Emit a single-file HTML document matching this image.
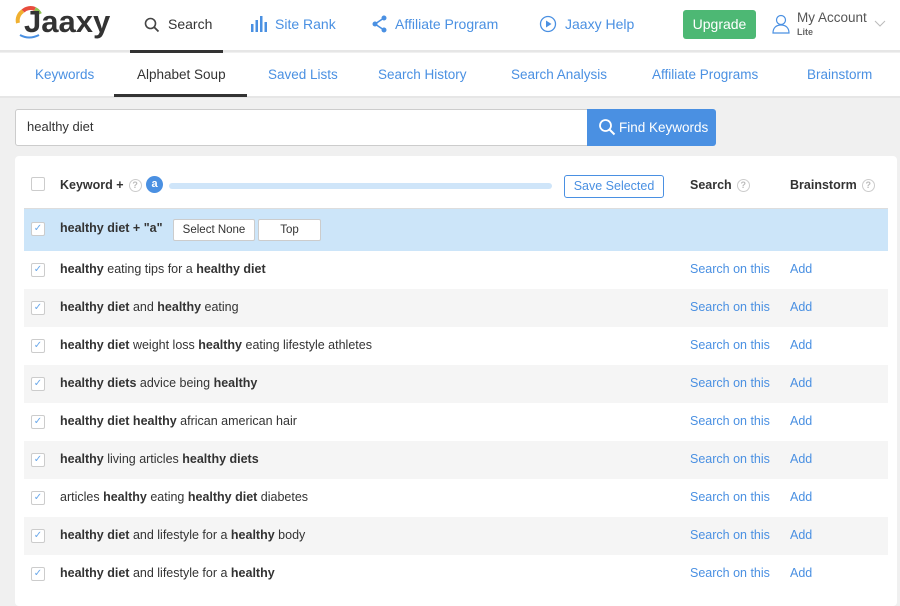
<!DOCTYPE html><html><head><style>
*{box-sizing:border-box;margin:0;padding:0}
body{width:900px;height:595px;overflow:hidden;background:#f0f0f0;font-family:"Liberation Sans",sans-serif;font-size:13px;color:#333}
.top{position:absolute;left:0;top:0;width:900px;height:52px;background:#fff;border-bottom:2px solid #e6e6e6}
.sub{position:absolute;left:0;top:53px;width:900px;height:45px;background:#fff;border-bottom:2px solid #e6e6e6}
.a{position:absolute;white-space:nowrap}
.blue{color:#4a90e2}
.nav{font-size:14px;top:16px}
.sn{font-size:13.5px;top:14px;color:#4a90e2}
.card{position:absolute;left:15px;top:156px;width:882px;height:450px;background:#fff;border-radius:4px}
.row{position:absolute;left:9px;width:864px;height:38px}
.row.g{background:#f5f5f5}
.cb{position:absolute;left:7px;top:12px;width:14px;height:14px;border:1px solid #ccc;background:#fff;border-radius:2px;color:#6aa8ea;font-size:10px;line-height:12px;text-align:center}
.kw{position:absolute;left:36px;top:11px;font-size:12.5px}
.s{position:absolute;left:666px;top:11px;color:#4a90e2;font-size:12.5px}
.ad{position:absolute;left:766px;top:11px;color:#4a90e2;font-size:12.5px}
.q{display:inline-block;width:13px;height:13px;border:1px solid #ccc;border-radius:50%;font-size:9px;color:#bbb;text-align:center;line-height:11px;vertical-align:middle;margin-left:5px}
.btn{position:absolute;top:10px;height:22px;border:1px solid #ccc;border-radius:2px;background:#fff;font-size:11.5px;text-align:center;line-height:20px}
</style></head><body>
<div class="top">
<svg class="a" style="left:15px;top:5px" width="28" height="34" viewBox="0 0 28 34"><path d="M3 18 A11 11 0 0 1 8 6" stroke="#f0b030" stroke-width="4" fill="none"/><path d="M8 6 A11 11 0 0 1 20 4" stroke="#e84c3d" stroke-width="4" fill="none"/><path d="M20 4 A11 11 0 0 1 25 9" stroke="#8cc152" stroke-width="4" fill="none"/><path d="M5 30 Q14 35 24 30" stroke="#4a90e2" stroke-width="2" fill="none"/></svg>
<div class="a" style="left:24px;top:4px;font-size:31px;font-weight:bold;color:#333">Jaaxy</div>
<div class="a" style="left:130px;top:50px;width:93px;height:3px;background:#333"></div>
<svg class="a" style="left:144px;top:17px" width="16" height="16" viewBox="0 0 16 16"><circle cx="6.5" cy="6.5" r="5" stroke="#444" stroke-width="1.6" fill="none"/><path d="M10 10l4.5 4.5" stroke="#444" stroke-width="1.8"/></svg>
<div class="a nav" style="left:168px;color:#333">Search</div>
<svg class="a" style="left:250px;top:16px" width="18" height="16"><rect x="1" y="8" width="2.5" height="8" fill="#4a90e2"/><rect x="5.5" y="4" width="2.5" height="12" fill="#4a90e2"/><rect x="10" y="0" width="2.5" height="16" fill="#4a90e2"/><rect x="14.5" y="6" width="2.5" height="10" fill="#4a90e2"/></svg>
<div class="a nav blue" style="left:275px">Site Rank</div>
<svg class="a" style="left:372px;top:15px" width="16" height="18"><circle cx="12" cy="3" r="2.5" fill="#4a90e2"/><circle cx="3" cy="9" r="2.5" fill="#4a90e2"/><circle cx="12" cy="15" r="2.5" fill="#4a90e2"/><path d="M12 3L3 9L12 15" stroke="#4a90e2" stroke-width="1.5" fill="none"/></svg>
<div class="a nav blue" style="left:395px">Affiliate Program</div>
<svg class="a" style="left:539px;top:15px" width="18" height="18"><circle cx="9" cy="9" r="7.5" stroke="#4a90e2" stroke-width="1.3" fill="none"/><path d="M7 5.5v7l5.5-3.5z" fill="#4a90e2"/></svg>
<div class="a nav blue" style="left:565px">Jaaxy Help</div>
<div class="a" style="left:683px;top:10px;width:73px;height:29px;background:#4db874;border-radius:3px;color:#fff;font-size:14px;text-align:center;line-height:29px">Upgrade</div>
<svg class="a" style="left:772px;top:14px" width="18" height="20"><circle cx="9" cy="6" r="4.5" stroke="#4a90e2" stroke-width="1.2" fill="none"/><path d="M1 19c0-5 3-8 8-8s8 3 8 8z" stroke="#4a90e2" stroke-width="1.2" fill="none"/></svg>
<div class="a" style="left:797px;top:10px;font-size:13.5px;color:#555">My Account</div>
<div class="a" style="left:797px;top:27px;font-size:9px;color:#666;font-weight:bold">Lite</div>
<svg class="a" style="left:874px;top:20px" width="12" height="8"><path d="M1 1l5 5 5-5" stroke="#bbb" fill="none"/></svg>
</div>
<div class="sub">
<div class="a sn" style="left:35px">Keywords</div>
<div class="a sn" style="left:137px;color:#333">Alphabet Soup</div>
<div class="a" style="left:114px;top:41px;width:133px;height:3px;background:#333"></div>
<div class="a sn" style="left:268px">Saved Lists</div>
<div class="a sn" style="left:378px">Search History</div>
<div class="a sn" style="left:511px">Search Analysis</div>
<div class="a sn" style="left:652px">Affiliate Programs</div>
<div class="a sn" style="left:807px">Brainstorm</div>
</div>
<div class="a" style="left:15px;top:109px;width:573px;height:37px;background:#fff;border:1px solid #ccc;border-radius:3px 0 0 3px;padding:9px 11px;font-size:13px">healthy diet</div>
<div class="a" style="left:587px;top:109px;width:129px;height:37px;background:#4a90e2;border-radius:0 3px 3px 0;color:#fff;font-size:13.5px;line-height:37px;padding-left:32px">Find Keywords</div>
<svg class="a" style="left:598px;top:118px" width="18" height="18"><circle cx="7.5" cy="7.5" r="5.5" stroke="#fff" stroke-width="1.8" fill="none"/><path d="M11.5 11.5l5 5" stroke="#fff" stroke-width="2"/></svg>
<div class="card">
<div class="row" style="top:10px;height:43px;border-bottom:1px solid #ddd">
<div class="cb" style="top:11px;border-color:#ccc"></div>
<div class="a" style="left:36px;top:12px;font-weight:bold;font-size:12.5px">Keyword +<span class="q">?</span></div>
<div class="a" style="left:145px;top:17px;width:383px;height:6px;background:#cfe5f9;border-radius:3px"></div>
<div class="a" style="left:122px;top:10px;width:17px;height:17px;border-radius:50%;background:#4a90e2;color:#fff;font-weight:bold;font-size:11px;text-align:center;line-height:16px">a</div>
<div class="a" style="left:540px;top:9px;width:100px;height:23px;border:1px solid #4a90e2;border-radius:3px;color:#4a90e2;text-align:center;line-height:21px;font-size:12.5px">Save Selected</div>
<div class="a" style="left:666px;top:12px;font-weight:bold;font-size:12.5px">Search<span class="q">?</span></div>
<div class="a" style="left:766px;top:12px;font-weight:bold;font-size:12.5px">Brainstorm<span class="q">?</span></div>
</div>
<div class="row" style="top:53px;height:42px;background:#cce5f9">
<div class="cb" style="top:13px">✓</div>
<div class="kw" style="top:12px;font-weight:bold">healthy diet + "a"</div>
<div class="btn" style="left:149px;width:82px">Select None</div>
<div class="btn" style="left:234px;width:63px">Top</div>
</div>
<div class="row" style="top:95px"><div class="cb">✓</div><div class="kw"><b>healthy</b> eating tips for a <b>healthy diet</b></div><div class="s">Search on this</div><div class="ad">Add</div></div>
<div class="row g" style="top:133px"><div class="cb">✓</div><div class="kw"><b>healthy diet</b> and <b>healthy</b> eating</div><div class="s">Search on this</div><div class="ad">Add</div></div>
<div class="row" style="top:171px"><div class="cb">✓</div><div class="kw"><b>healthy diet</b> weight loss <b>healthy</b> eating lifestyle athletes</div><div class="s">Search on this</div><div class="ad">Add</div></div>
<div class="row g" style="top:209px"><div class="cb">✓</div><div class="kw"><b>healthy diets</b> advice being <b>healthy</b></div><div class="s">Search on this</div><div class="ad">Add</div></div>
<div class="row" style="top:247px"><div class="cb">✓</div><div class="kw"><b>healthy diet healthy</b> african american hair</div><div class="s">Search on this</div><div class="ad">Add</div></div>
<div class="row g" style="top:285px"><div class="cb">✓</div><div class="kw"><b>healthy</b> living articles <b>healthy diets</b></div><div class="s">Search on this</div><div class="ad">Add</div></div>
<div class="row" style="top:323px"><div class="cb">✓</div><div class="kw">articles <b>healthy</b> eating <b>healthy diet</b> diabetes</div><div class="s">Search on this</div><div class="ad">Add</div></div>
<div class="row g" style="top:361px"><div class="cb">✓</div><div class="kw"><b>healthy diet</b> and lifestyle for a <b>healthy</b> body</div><div class="s">Search on this</div><div class="ad">Add</div></div>
<div class="row" style="top:399px"><div class="cb">✓</div><div class="kw"><b>healthy diet</b> and lifestyle for a <b>healthy</b></div><div class="s">Search on this</div><div class="ad">Add</div></div>
</div>
</body></html>
